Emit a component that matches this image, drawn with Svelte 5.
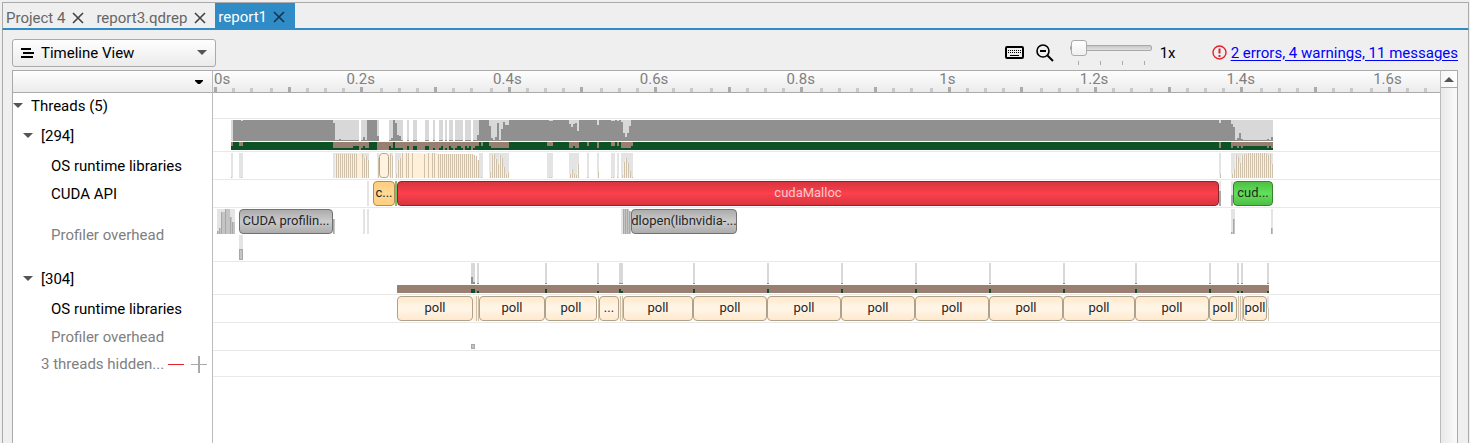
<script>
  // Left edge of the timeline pane; x values below are measured from the window edge.
  const PANE = 213;
  const SCALE = 733.4;

  const tabs = [
    { name: 'Project 4', active: false },
    { name: 'report3.qdrep', active: false },
    { name: 'report1', active: true }
  ];

  const ticks = Array.from({ length: 67 }, (_, i) => ({
    x: 1 + 2 * Math.round((i * 0.025 * SCALE) / 2),
    major: i % 4 === 0
  }));
  const labels = Array.from({ length: 9 }, (_, i) => ({
    x: 1 + i * 0.2 * SCALE,
    text: i === 0 ? '0s' : i === 5 ? '1s' : (i * 0.2).toFixed(1) + 's'
  }));

  // [x, width, busy height] on a 21 px high track
  const load = [
    [231, 2, 0], [233, 8, 21], [241, 2, 20], [243, 90, 21], [333, 2, 18], [335, 4, 1], [339, 2, 2],
    [341, 18, 1], [361, 2, 1], [363, 2, 4], [365, 2, 1], [367, 10, 21], [377, 2, 5], [389, 2, 1],
    [391, 2, 3], [393, 2, 21], [395, 2, 18], [397, 2, 6], [399, 2, 5], [401, 2, 1], [407, 2, 1],
    [413, 4, 1], [425, 4, 1], [433, 2, 1], [439, 4, 1], [445, 2, 1], [449, 4, 1], [455, 8, 1],
    [465, 6, 1], [473, 4, 1], [477, 2, 6], [479, 10, 21], [489, 2, 15], [491, 2, 3], [493, 2, 1],
    [495, 2, 4], [497, 2, 18], [499, 2, 1], [501, 2, 12], [503, 2, 19], [505, 4, 16],
    [509, 40, 21], [549, 4, 20], [553, 16, 21], [569, 2, 17], [571, 2, 14], [573, 2, 17],
    [575, 2, 18], [577, 2, 10], [579, 18, 21], [597, 2, 16], [599, 12, 21], [611, 4, 20],
    [615, 2, 21], [617, 2, 20], [619, 2, 21], [621, 2, 19], [623, 2, 8], [625, 2, 4],
    [627, 2, 8], [629, 2, 15], [631, 588, 21], [1219, 2, 18], [1221, 10, 21], [1231, 2, 17],
    [1233, 2, 14], [1235, 2, 1], [1237, 2, 3], [1239, 2, 8], [1241, 2, 2], [1243, 24, 1],
    [1267, 2, 2], [1269, 2, 1], [1271, 2, 4]
  ];

  // [x, width, height] of the running state on an 8 px high strip
  const running = [
    [231, 2, 4], [233, 6, 8], [239, 4, 4], [243, 90, 8], [333, 6, 2], [339, 14, 2], [353, 6, 4],
    [361, 2, 2], [363, 2, 4], [365, 4, 2], [369, 8, 8], [389, 2, 4], [391, 2, 2], [393, 2, 8],
    [395, 8, 2], [407, 2, 4], [413, 4, 4], [425, 4, 4], [433, 2, 2], [439, 2, 2], [441, 2, 4],
    [445, 2, 2], [449, 2, 4], [451, 2, 2], [455, 2, 2], [457, 4, 4], [461, 2, 2], [465, 2, 4],
    [467, 2, 2], [469, 2, 4], [473, 2, 2], [475, 4, 4], [479, 2, 8], [481, 2, 4], [483, 6, 8],
    [489, 2, 4], [491, 18, 2], [509, 38, 8], [547, 6, 4], [553, 16, 8], [569, 4, 2],
    [573, 2, 4], [575, 4, 2], [579, 8, 8], [587, 2, 4], [589, 8, 8], [597, 2, 2], [599, 12, 8],
    [611, 4, 4], [615, 2, 8], [617, 2, 4], [619, 2, 8], [621, 10, 2], [631, 2, 4],
    [633, 586, 8], [1219, 2, 2], [1221, 10, 8], [1231, 2, 2], [1233, 4, 4], [1237, 2, 2],
    [1239, 2, 4], [1241, 2, 2], [1243, 24, 4], [1267, 2, 2], [1269, 2, 4], [1271, 2, 2]
  ];

  const osShade = [
    [231, 2], [239, 4], [333, 36], [377, 2], [389, 4], [395, 6], [479, 4], [489, 20], [547, 6], [569, 10],
    [587, 2], [597, 2], [611, 4], [617, 2], [621, 12], [1219, 2], [1231, 42]
  ];
  // [first x, heights of 2 px wide calls]
  const osCalls = [
    [335, [24, 24, 24, 24, 24, 24, 24, 24, 24, 24, 24, 25, 25, 24, 20, 22, 18]],
    [377, [20]], [389, [24, 22]], [395, [4, 18, 20]],
    [401, [25, 24, 25, 25, 25, 25, 25, 25, 25, 25, 25, 24, 25, 25, 24, 25, 25, 24, 24, 24, 24, 24, 24, 24, 24, 24, 24, 24, 24, 24, 24, 24, 24, 24, 24, 24, 23, 22, 18]],
    [489, [6, 23, 24, 19, 14, 23, 20, 11, 4, 6]],
    [569, [4, 9, 4, 3, 14]], [597, [6]], [621, [3, 16, 20, 15, 7, 1]], [1219, [4]],
    [1231, [4, 9, 23, 21, 15, 23, 24, 24, 25, 25, 25, 25, 25, 25, 25, 25, 25, 24, 23, 24, 14]]
  ];
  const osBands = [[357, 4], [403, 3], [409, 3], [413, 10], [425, 3], [429, 3], [435, 3]];
  const osDots = [231, 241, 481, 549, 551, 587, 611, 613, 617];

  const overheadShade = [[217, 18], [363, 2], [367, 2], [621, 2], [1231, 4], [1271, 2]];
  const overheadBars = [
    [217, 2, 3], [219, 2, 6], [221, 4, 22], [225, 5, 25], [230, 2, 17], [232, 3, 12], [333, 2, 15],
    [623, 2, 25], [625, 2, 25], [627, 2, 25], [629, 2, 23], [1231, 2, 2], [1233, 2, 15], [1271, 2, 6]
  ];

  const wakeups = [
    [471, 2, 7, 4], [473, 2, 2, 4], [477, 2, 1, 2], [545, 2, 1, 4], [597, 2, 1, 2], [619, 2, 1, 4],
    [621, 2, 1, 2], [693, 2, 1, 4], [767, 2, 1, 4], [841, 2, 1, 4], [915, 2, 1, 4], [989, 2, 1, 4],
    [1063, 2, 1, 4], [1135, 2, 1, 4], [1209, 2, 1, 4], [1237, 2, 1, 2], [1241, 2, 1, 2], [1267, 2, 1, 2]
  ];

  const polls = [
    [397, 473], [479, 545], [545, 597], [599, 619], [623, 693], [693, 767], [767, 841], [841, 915],
    [915, 989], [989, 1063], [1063, 1135], [1135, 1209], [1209, 1237], [1243, 1267]
  ].map(([a, b]) => ({ x: a, w: b - a, kind: 'poll', text: b - a < 24 ? '...' : 'poll' }));

  const cuda = [
    { x: 373, w: 22, kind: 'amber', text: 'c...' },
    { x: 397, w: 822, kind: 'red', text: 'cudaMalloc' },
    { x: 1233, w: 40, kind: 'green', text: 'cud...' }
  ];
  const overhead = [
    { x: 239, w: 94, kind: 'grey', text: 'CUDA profilin...' },
    { x: 631, w: 106, kind: 'grey', text: 'dlopen(libnvidia-...' }
  ];

  const tree = [
    { text: 'Threads (5)', level: 0, size: 'h26', open: true },
    { text: '[294]', level: 1, size: 'h33', open: true },
    { text: 'OS runtime libraries', level: 2, size: 'h28' },
    { text: 'CUDA API', level: 2, size: 'h28' },
    { text: 'Profiler overhead', level: 2, size: 'h54', dim: true },
    { text: '[304]', level: 1, size: 'h33', open: true },
    { text: 'OS runtime libraries', level: 2, size: 'h28' },
    { text: 'Profiler overhead', level: 2, size: 'h28', dim: true }
  ];
</script>

{#snippet blocks(list)}
  {#each list as b}
    <button class="block {b.kind}" style="left:{b.x - PANE}px;width:{b.w}px">{b.text}</button>
  {/each}
{/snippet}

{#snippet bar(x, y, w, h, cls)}
  <rect x={x - PANE} {y} width={w} height={h} class={cls} />
{/snippet}

<div class="window">
  <nav class="tabs">
    {#each tabs as t}
      <div class="tab" class:active={t.active}>
        <a href="#top">{t.name}</a>
        <button class="close" aria-label="Close {t.name}">
          <svg width="12" height="12" viewBox="0 0 12 12"><path d="M1 1 11 11M11 1 1 11" /></svg>
        </button>
      </div>
    {/each}
  </nav>

  <div class="toolbar">
    <div class="view">
      <svg class="lines" width="14" height="12" viewBox="0 0 14 12"><path d="M1 2H11M3 6H14M1 10H13" /></svg>
      <select aria-label="View"><option>Timeline View</option></select>
      <svg class="drop" width="10" height="6" viewBox="0 0 10 6"><path d="M0 0H10L5 5Z" /></svg>
    </div>
    <div class="tools">
      <button class="tool" aria-label="Keyboard shortcuts">
        <svg width="19" height="13" viewBox="0 0 19 13">
          <rect x="1" y="1" width="17" height="11" rx="1" fill="none" stroke="#000" stroke-width="2" />
          <path d="M3 4.500h1M5 4.500h1M7 4.500h1M9 4.500h1M11 4.500h1M13 4.500h1M15 4.500h1M3 6.500h1M5 6.500h1M7 6.500h1M9 6.500h1M11 6.500h1M13 6.500h1M15 6.500h1M5 9.500h9" stroke="#000" />
        </svg>
      </button>
      <button class="tool" aria-label="Zoom out">
        <svg width="18" height="18" viewBox="0 0 18 18" fill="none" stroke="#000">
          <circle cx="7" cy="7" r="6" stroke-width="1.600" /><path d="M4 7H10" stroke-width="2" /><path d="M11.500 11.500 17 17" stroke-width="2" />
        </svg>
      </button>
      <div class="zoom">
        <input id="zoom" type="range" min="1" max="100" value="1" aria-label="Zoom" />
        <div class="marks"><i></i><i></i><i></i><i></i></div>
      </div>
      <label class="factor" for="zoom">1x</label>
      <svg class="alert" width="15" height="15" viewBox="0 0 15 15">
        <circle cx="7.500" cy="7.500" r="6.500" fill="none" stroke="#e0222b" stroke-width="1.400" />
        <path d="M7.500 3.500V8.500M7.500 10V12" stroke="#e0222b" stroke-width="2" />
      </svg>
      <a class="messages" href="#messages">2 errors, 4 warnings, 11 messages</a>
    </div>
  </div>

  <main class="panel">
    <aside>
      <div class="head">
        <button class="filter" aria-label="Row options"><svg width="8" height="5" viewBox="0 0 8 5"><path d="M0 0H8V1L5 4H3L0 1Z" /></svg></button>
      </div>
      {#each tree as r}
        <div class="item {r.size} level{r.level}" class:dim={r.dim}>
          {#if r.open}
            <button class="expander" aria-label="Collapse {r.text}"><svg width="10" height="6" viewBox="0 0 10 6"><path d="M0 0H10L5 5Z" /></svg></button>
          {/if}
          <span>{r.text}</span>
        </div>
      {/each}
      <div class="item h26 hidden dim">
        <span>3 threads hidden...</span>
        <div class="signs">
          <button aria-label="Hide"><svg width="16" height="17"><path d="M0 8.500H16" stroke="#e0222b" /></svg></button>
          <button aria-label="Show"><svg width="16" height="17"><path d="M0 8.500H16" stroke="#aaa" /><path d="M8 0V17" stroke="#aaa" stroke-width="2" /></svg></button>
        </div>
      </div>
    </aside>

    <section>
      <div class="head axis">
        {#each labels as l, i}
          <span class="time" class:first={i === 0} style="left:{l.x}px">{l.text}</span>
        {/each}
        <svg class="ticks">
          {#each ticks as t}
            <rect x={t.x} y={t.major ? 0 : 1} width="3" height="5" class={t.major ? 'major' : 'minor'} />
          {/each}
        </svg>
      </div>

      <div class="row h26"></div>

      <div class="row h33">
        <svg>
          {#each load as [x, w, h]}
            {@render bar(x, 1, w, 21, 'shade')}
            {@render bar(x, 22 - h, w, h, 'busy')}
          {/each}
          {@render bar(231, 23, 1042, 8, 'state')}
          {#each running as [x, w, h]}
            {@render bar(x, 31 - h, w, h, 'run')}
          {/each}
        </svg>
      </div>

      <div class="row h28">
        <svg>
          {#each osShade as [x, w]}
            {@render bar(x, 1, w, 25, 'pale')}
          {/each}
          {#each osCalls as [x0, list]}
            {#each list as h, i}
              {@render bar(x0 + 2 * i, 26 - h, 1, h, 'cream')}
              {@render bar(x0 + 2 * i + 1, 26 - h, 1, h, 'tan')}
            {/each}
          {/each}
          {#each osBands as [x, w]}
            {@render bar(x, 1, w, 25, 'cream')}
          {/each}
          {#each osDots as x}
            {@render bar(x, 25, 1, 1, 'tan')}
          {/each}
          <rect x={379.5 - PANE} y="1.500" width="9" height="24" rx="3" class="call" />
        </svg>
      </div>

      <div class="row h28">
        <svg>
          {@render bar(367, 1, 2, 25, 'pale')}
          {@render bar(395, 1, 2, 25, 'leaf')}
          {@render bar(1219, 1, 2, 25, 'pale')}
          {@render bar(1219, 11, 2, 15, 'over')}
          {@render bar(1231, 1, 2, 25, 'pale')}
          {@render bar(1231, 15, 2, 11, 'over')}
        </svg>
        {@render blocks(cuda)}
      </div>

      <div class="row h54">
        <svg>
          {#each overheadShade as [x, w]}
            {@render bar(x, 1, w, 25, 'pale')}
          {/each}
          {#each overheadBars as [x, w, h]}
            {@render bar(x, 26 - h, w, h, 'light')}
            {@render bar(x, 26 - h, 1, h, 'over')}
          {/each}
          {@render bar(239, 27, 4, 25, 'pale')}
          {@render bar(239, 41, 4, 11, 'over')}
          {@render bar(240, 42, 2, 9, 'light')}
        </svg>
        {@render blocks(overhead)}
      </div>

      <div class="row h33">
        <svg>
          {@render bar(397, 23, 872, 8, 'state')}
          {#each wakeups as [x, w, h, g]}
            {@render bar(x, 1, w, 21, 'shade')}
            {@render bar(x, 22 - h, w, h, 'busy')}
            {@render bar(x, 31 - g, w, g, 'run')}
          {/each}
        </svg>
      </div>

      <div class="row h28">
        <svg>
          {@render bar(473, 1, 5, 25, 'cream')}
          {@render bar(619, 1, 4, 25, 'cream')}
          {@render bar(1237, 1, 6, 25, 'cream')}
          {@render bar(1267, 1, 2, 12, 'pale')}
          {#each [476, 478, 598, 620, 622, 1238, 1240, 1242, 1268] as x}
            {@render bar(x, x === 1268 ? 13 : 1, 1, x === 1268 ? 13 : 25, 'tan')}
          {/each}
        </svg>
        {@render blocks(polls)}
      </div>

      <div class="row h28">
        <svg>
          {@render bar(471, 21, 4, 5, 'over')}
          {@render bar(472, 22, 2, 3, 'light')}
        </svg>
      </div>
      <div class="row h26"></div>
    </section>

    <div class="scroll">
      <button aria-label="Scroll up"><svg width="10" height="5" viewBox="0 0 10 5"><path d="M0 5H10L5 0Z" /></svg></button>
    </div>
  </main>
</div>

<style>
  :global(body) {
    margin: 0;
    background: #efefef;
    font-family: Roboto, 'Liberation Sans', sans-serif;
  }
  * { box-sizing: border-box; }
  button { padding: 0; margin: 0; border: 0; background: none; font: inherit; display: flex; align-items: center; justify-content: center; }
  svg { display: block; flex: none; }

  .window {
    min-height: 100vh;
    padding: 2px 1px 0 2px;
    display: flex;
    flex-direction: column;
    font-size: 15px;
    line-height: 18px;
    color: #000;
    overflow: hidden;
  }
  .tabs {
    display: flex;
    height: 28px;
    flex: none;
    border: 1px solid #aaa;
    border-bottom: 2px solid #308cc6;
  }
  .tab { display: flex; align-items: center; gap: 7px; padding: 4px 9px 0 3px; }
  .tab a { color: #666; text-decoration: none; }
  .tab path { stroke: #444; stroke-width: 1.6; }
  .tab.active { background: #308cc6; padding: 2px 10px 0 3px; gap: 6px; }
  .tab.active a { color: #fff; }
  .tab.active path { stroke: #12354c; }

  .toolbar {
    display: flex;
    justify-content: space-between;
    align-items: center;
    flex: none;
    height: 40px;
    padding: 5px 10px 0 9px;
    border: solid #aaa;
    border-width: 0 1px;
  }
  .view { position: relative; width: 204px; }
  .view select {
    appearance: none;
    width: 100%;
    height: 28px;
    padding: 0 28px;
    border: 1px solid #aaa;
    border-radius: 3px;
    background: linear-gradient(#fefefe, #ebebeb);
    font: inherit;
    color: #000;
  }
  .lines { position: absolute; left: 8px; top: 8px; pointer-events: none; }
  .lines path { stroke: #000; stroke-width: 2; }
  .drop { position: absolute; right: 9px; top: 11px; pointer-events: none; }
  .drop path, .expander path { fill: #555; }
  .tools { display: flex; align-items: center; }
  .tool { margin-right: 12px; }
  .tool + .tool { margin-right: 16px; }
  .zoom { width: 82px; height: 28px; display: flex; flex-direction: column; }
  .zoom input { appearance: none; width: 100%; height: 18px; margin: 0; background: none; }
  .zoom input::-webkit-slider-runnable-track {
    height: 6px;
    border: 1px solid #aaa;
    border-radius: 2px;
    background: linear-gradient(#c8c8c8, #e0e0e0);
  }
  .zoom input::-webkit-slider-thumb {
    appearance: none;
    width: 16px;
    height: 16px;
    margin-top: -6px;
    border: 1px solid #aaa;
    border-radius: 3px;
    background: linear-gradient(#fff, #f0f0f0);
  }
  .marks { display: flex; justify-content: space-between; padding: 4px 7px 0 8px; }
  .marks i { width: 1px; height: 4px; background: #aaa; }
  .factor { margin-left: 8px; width: 52px; }
  .messages { margin-left: 4px; color: #00f; text-underline-offset: 2px; }

  .panel {
    flex: 1;
    display: grid;
    grid-template-columns: 201px minmax(0, 1fr) 18px;
    padding: 0 10px 0 9px;
    border: solid #aaa;
    border-width: 0 1px;
  }
  .panel > * { border-top: 1px solid #aaa; }
  aside { border-left: 1px solid #aaa; border-right: 1px solid #bbb; background: #fff; }
  .head { height: 22px; border-bottom: 1px solid #aaa; background: linear-gradient(#fefefe, #ebebeb); }
  .filter { margin-left: auto; width: 27px; height: 23px; }
  .axis { position: relative; color: #808080; overflow: hidden; }
  .time { position: absolute; top: -1px; transform: translateX(-50%); }
  .time.first { transform: none; }
  .ticks { position: absolute; left: 0; bottom: 0; width: 100%; height: 5px; }
  .major { fill: #aaa; }
  .minor { fill: #c8c8c8; }

  .item { display: flex; align-items: center; gap: 8px; }
  .level1 { padding-left: 10px; }
  .level2 { padding-left: 38px; }
  .hidden { padding-left: 28px; gap: 4px; }
  .signs { display: flex; gap: 7px; }
  .dim { color: #808080; }
  .h26 { height: 26px; }
  .h28 { height: 28px; }
  .h33 { height: 33px; }
  .h54 { height: 54px; }

  section { background: #fff; overflow: hidden; }
  .row { position: relative; border-bottom: 1px solid #e8e8e8; }
  .row svg { width: 100%; height: 100%; }
  .shade { fill: #d8d8d8; }
  .busy { fill: #909090; }
  .state { fill: #987f71; }
  .run { fill: #0c5226; }
  .pale { fill: #e4e4e4; }
  .cream { fill: #fff0da; }
  .tan { fill: #cfc1aa; }
  .leaf { fill: #74c46c; }
  .over { fill: #a8a8a8; }
  .light { fill: #c4c4c4; }
  .call { fill: #fff3e0; stroke: #b0a288; }

  .block {
    position: absolute;
    top: 1px;
    height: 25px;
    padding-bottom: 2px;
    border: 1px solid;
    border-radius: 4px;
    font-size: 13px;
    line-height: 16px;
    color: #262626;
    white-space: nowrap;
    overflow: hidden;
  }
  .poll { background: linear-gradient(#ffe9cb, #fff6ea 50%, #ffe9cb); border-color: #b0a288; }
  .amber { background: linear-gradient(#ffcd7c, #ffd998 50%, #ffcd7c); border-color: #b08d55; }
  .red { background: linear-gradient(#d8353f, #fc404c 50%, #d8353f); border-color: #8e2229; color: #fbc8cb; }
  .green { background: linear-gradient(#4fbf47, #62e058 50%, #4fbf47); border-color: #36822f; }
  .grey { background: linear-gradient(#acacac, #cbcbcb 50%, #acacac); border-color: #717171; }

  .scroll { border-left: 1px solid #bbb; border-right: 1px solid #aaa; background: linear-gradient(90deg, #e9e9e9, #fafafa); }
  .scroll button { width: 100%; height: 17px; border-bottom: 1px solid #aaa; background: linear-gradient(90deg, #f6f6f6, #fff); }
  .scroll path { fill: #555; }
</style>
